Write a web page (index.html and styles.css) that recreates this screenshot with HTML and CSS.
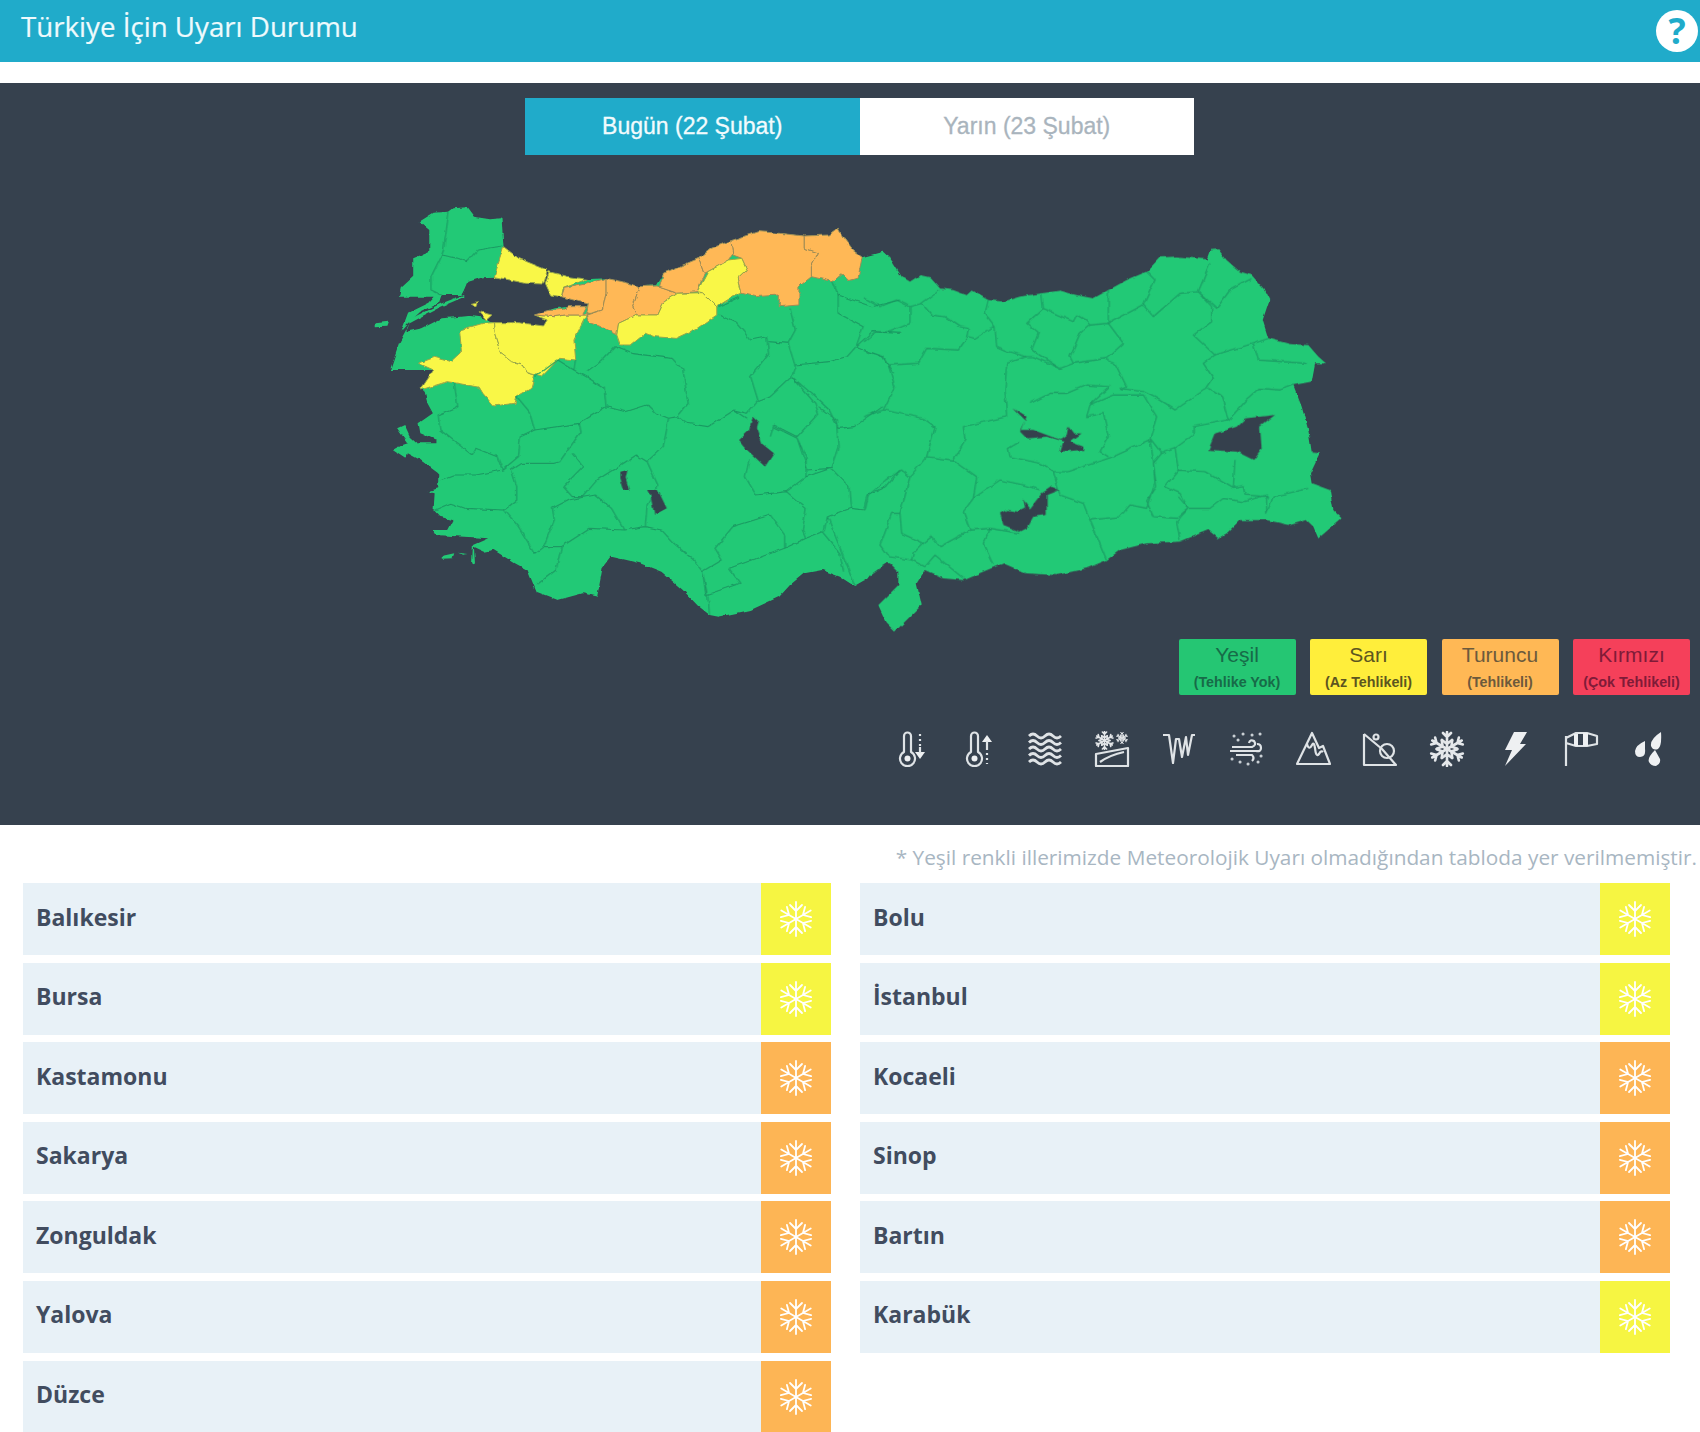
FILE: index.html
```html
<!DOCTYPE html>
<html lang="tr">
<head>
<meta charset="utf-8">
<title>Türkiye İçin Uyarı Durumu</title>
<link rel="stylesheet" href="styles.css">
</head>
<body>
<svg class="defs" width="0" height="0">
  <symbol id="flake" viewBox="0 0 36 36">
    <g class="flake-arm"><path d="M18 1V35M18 10l-6-6M18 10l6-6M18 26l-6 6M18 26l6 6"/></g>
    <g class="flake-arm" transform="rotate(60 18 18)"><path d="M18 1V35M18 10l-6-6M18 10l6-6M18 26l-6 6M18 26l6 6"/></g>
    <g class="flake-arm" transform="rotate(120 18 18)"><path d="M18 1V35M18 10l-6-6M18 10l6-6M18 26l-6 6M18 26l6 6"/></g>
  </symbol>
  <symbol id="flake2" viewBox="0 0 36 36">
    <g class="flake-arm"><path d="M18 1V35M18 6l-4-4M18 6l4-4M18 13l-5-4M18 13l5-4M18 30l-4 4M18 30l4 4M18 23l-5 4M18 23l5 4"/></g>
    <g class="flake-arm" transform="rotate(60 18 18)"><path d="M18 1V35M18 6l-4-4M18 6l4-4M18 13l-5-4M18 13l5-4M18 30l-4 4M18 30l4 4M18 23l-5 4M18 23l5 4"/></g>
    <g class="flake-arm" transform="rotate(120 18 18)"><path d="M18 1V35M18 6l-4-4M18 6l4-4M18 13l-5-4M18 13l5-4M18 30l-4 4M18 30l4 4M18 23l-5 4M18 23l5 4"/></g>
  </symbol>
</svg>
<header class="topbar">
  <h1 class="title">Türkiye İçin Uyarı Durumu</h1>
  <span class="help">?</span>
</header>
<section class="panel">
  <div class="tabs">
    <div class="tab tab-on">Bugün (22 Şubat)</div>
    <div class="tab tab-off">Yarın (23 Şubat)</div>
  </div>
  <svg class="map" viewBox="0 155 1700 484" width="1700" height="484">
    <defs>
      <filter id="rough" filterUnits="userSpaceOnUse" x="0" y="155" width="1700" height="484">
        <feTurbulence type="fractalNoise" baseFrequency="0.11" numOctaves="2" seed="4" result="n"/>
        <feDisplacementMap in="SourceGraphic" in2="n" scale="4" xChannelSelector="R" yChannelSelector="G"/>
        <feGaussianBlur stdDeviation="0.35"/>
      </filter>
    </defs>
    <g filter="url(#rough)">
    <g transform="translate(340 180) scale(.35714 .33333)">
      <path class="land" d="M222 125L262 98 305 95 318 85 355 82 375 110 420 118 452 115 458 200 432 290 400 292 360 305 340 345 285 345 278 368 225 395 190 430 172 452 190 400 250 368 265 350 165 350 170 325 205 290 205 235 250 215 250 150Z"/>
      <path class="land" d="M585 275L640 290 690 298 745 295 790 305 840 320 885 315 905 280 945 262 1005 235 1040 205 1095 182 1170 155 1230 160 1300 168 1370 165 1395 145 1410 175 1435 210 1462 232 1520 215 1545 240 1545 1150 1530 1150 1490 1170 1478 1195 1440 1218 1400 1190 1350 1170 1300 1180 1260 1215 1230 1250 1150 1290 1060 1310 1035 1305 1000 1275 960 1230 900 1175 840 1150 760 1130 735 1165 720 1250 680 1240 610 1260 550 1235 525 1170 490 1150 430 1110 405 1115 375 1100 378 1155 370 1150 372 1095 415 1075 270 1065 262 1050 300 1050 315 1020 280 1010 262 990 265 940 245 935 275 925 275 880 225 840 190 820 185 835 150 810 175 795 190 790 160 745 180 735 195 770 215 790 270 790 270 780 225 760 220 730 260 700 245 670 235 630 225 630 265 570 140 570 165 490 195 430 270 395 340 375 340 405 395 412 430 428 500 430 570 438 580 420 545 405 600 385 695 372 620 350 625 325 590 345 575 310Z"/>
      <path class="land" d="M100 430L135 425 130 440 100 442Z"/>
      <path class="land" d="M285 1128L320 1120 315 1135 285 1136ZM330 1118L360 1122 345 1124Z"/>
      <path class="sea" d="M355 310L400 295 470 295 570 330 600 350 695 372 690 380 640 380 600 385 545 405 580 420 570 438 500 430 430 428 385 405 340 410 285 415 230 445 185 455 195 430 250 395 300 365 340 350Z"/>
      <path class="land" d="M190 420L280 372 345 345 345 352 280 382 195 430Z"/>
      <path class="ylw" d="M365 370L385 365 380 378ZM390 395L425 405 410 420Z"/>
      <path class="ylw" d="M458 200L500 235 580 270 570 312 520 310 432 290Z"/>
      <path class="ylw" d="M585 275L640 290 690 298 625 325 620 350 590 345 575 310Z"/>
      <path class="ylw" d="M220 550L265 532 310 545 340 515 335 450 400 430 430 428 432 460 450 520 490 550 510 555 525 578 545 585 535 625 495 650 490 670 430 678 400 640 390 622 330 610 300 605 225 630 250 590 262 570Z"/>
      <path class="ylw" d="M430 428L500 428 570 438 580 420 545 405 600 410 630 405 690 405 655 480 660 540 615 535 565 590 525 578 510 555 480 545 450 520 432 460Z"/>
      <path class="org" d="M620 350L628 325 690 312 745 295 745 340 735 390 700 400 680 400 690 380 640 380 625 388 580 392 545 405 600 410 630 405 690 405 695 372Z"/>
      <path class="org" d="M745 295L790 305 840 320 820 380 830 405 780 430 775 465 730 440 695 425 690 405 735 390 745 340Z"/>
      <path class="org" d="M840 320L885 318 945 340 905 370 890 405 830 405 820 380Z"/>
      <path class="org" d="M895 322L905 280 945 262 1005 235 1020 280 1000 335 945 340Z"/>
      <path class="org" d="M1005 235L1040 205 1095 182 1100 225 1090 240 1030 275 1020 280Z"/>
      <path class="org" d="M1095 182L1170 155 1230 160 1300 168 1300 205 1340 220 1320 260 1320 290 1285 320 1285 375 1230 380 1230 345 1165 350 1125 340 1115 295 1140 270 1125 235 1100 225Z"/>
      <path class="org" d="M1300 168L1370 165 1395 145 1410 175 1435 210 1462 232 1450 295 1425 302 1405 282 1380 305 1320 290 1320 260 1340 220 1300 205Z"/>
      <path class="ylw" d="M780 430L830 405 890 405 905 370 945 340 1015 338 1055 380 1055 405 1000 445 940 475 880 470 855 460 815 495 785 495 775 465Z"/>
      <path class="ylw" d="M1030 275L1090 240 1125 235 1140 270 1115 295 1125 340 1100 350 1055 380 1015 338 1000 335Z"/>
    </g>
    <g transform="translate(860 200) scale(.33333)">
      <path class="land" d="M12 172L90 170 100 190 125 230 150 245 180 225 210 232 240 265 280 270 320 285 335 272 385 300 430 305 480 290 545 280 600 272 650 285 700 295 745 270 800 240 860 215 900 172 950 170 1040 178 1050 150 1075 148 1100 180 1140 215 1175 225 1210 265 1228 300 1208 360 1225 415 1290 432 1345 435 1375 470 1398 490 1365 490 1355 545 1300 555 1325 620 1345 690 1355 755 1380 757 1350 820 1355 850 1410 870 1420 930 1445 955 1410 985 1375 1015 1360 980 1340 960 1290 975 1220 960 1140 960 1100 1000 1075 1015 1045 990 960 1025 860 1030 780 1050 740 1080 680 1105 590 1125 500 1120 430 1090 370 1115 310 1140 250 1135 195 1110 170 1150 185 1215 135 1265 105 1295 80 1270 55 1215 115 1155 115 1115 85 1085 25 1130 12 1140Z"/>
    </g>
    <g transform="translate(340 180) scale(.35714 .33333)">
      <path class="line" d="M305 95L290 210 285 225 330 235 355 245 385 210 455 198M285 225L255 290 255 330 285 345M320 610L330 680 275 705 280 750 340 800 370 825 380 805 440 830 455 870 380 885 315 885 280 900M495 650L530 695 545 750 505 770 500 830 455 870M545 750L670 730 675 755 615 845 600 850 510 850 480 870 495 920 495 960 460 990 350 985 310 970 265 990M460 990L500 1040 545 1120 570 1100 600 1020 595 985 640 960 715 945 760 985 795 1050 700 1045 620 1100 570 1100M650 820L680 860 625 920 650 950 680 950 720 900 830 825 860 845 890 915 860 975 855 1040 795 1050M620 1100L605 1170 550 1215M855 1040L900 1050 935 1090 990 1140 1015 1175 1030 1250 1035 1305M1015 1175L1070 1140 1050 1105 1100 1040 1205 1005 1245 1065 1245 1105 1305 1075 1350 1055 1400 1120 1410 1175M1015 1175L1025 1245 1120 1210 1090 1165 1180 1130 1245 1105M670 730L745 680 800 695 860 675 885 700 920 715 905 800 860 845M548 590L610 540 655 570 690 590 740 625 745 680M660 540L655 570M690 575L730 545 770 500 815 520 930 535 960 570 975 670 945 710 920 715M945 710L970 730 1030 740 1105 690 1140 715M1060 405L1110 430 1150 480 1195 470 1200 520 1150 590 1170 660 1140 700 1105 690M1200 485L1255 490 1275 560 1265 590 1205 650 1170 665M1260 385L1275 450 1255 490M1275 555L1370 545 1420 530 1445 500 1520 530 1550 580M1265 590L1320 640 1370 690 1395 745 1440 740 1520 680M1340 680L1390 720 1395 800 1375 865 1310 870 1280 775M1265 590L1330 670 1340 700 1280 770 1215 735 1205 770M1215 740L1280 775 1305 830 1305 890 1250 935 1165 945 1135 890 1145 840M1250 935L1305 985 1295 1050 1305 1075M1305 890L1375 865 1425 920 1430 985 1365 1010 1355 1055M1430 985L1470 990 1480 945 1530 920 1568 870M1365 1010L1410 1130 1440 1215M1395 345L1395 400 1465 440 1445 500M1395 345L1490 380 1568 360M1445 500L1490 455 1568 460M1395 345L1380 305M1060 380L1120 350"/>
      <path class="sea" d="M1155 710L1170 725 1165 745 1180 790 1215 820 1190 860 1170 840 1130 800 1115 780 1145 750ZM860 930L890 930 915 985 880 1005 870 950ZM785 875L805 870 800 895 810 930 795 930 785 895Z"/>
    </g>
    <g transform="translate(860 200) scale(.33333)">
      <path class="line" d="M12 293L60 320 110 300 150 320 150 370 90 395 50 395 12 425M150 320L185 310 240 270M185 310L215 345 255 350 300 380 325 385 320 415 295 450 200 445 175 490 85 495 70 470 12 452M85 495L105 560 70 630 12 650M325 410L345 415 390 385 405 380 410 440 445 455 500 470 440 490 435 570 440 650M385 300L375 340 405 380M500 470L520 470 600 505 640 490 630 470 660 400 690 375 745 370 790 430 740 475 640 490M545 280L550 325 500 370 535 400 515 450 600 505M550 325L640 365 650 345 675 360 690 375M745 270L745 370 850 315 885 240 860 215M850 315L880 350 960 280 1015 275 1055 320 1055 365 1000 405 1065 465 1030 490 1060 535 1040 565 945 630 890 595 850 575 780 565 800 560 765 490 730 475M1050 190L1015 275M1015 275L1070 325 1110 270 1175 235M1065 465L1180 430 1195 480 1340 490M1180 430L1225 415M1045 565L1085 590 1105 660M1105 660L1160 600 1200 565 1260 570 1300 555M440 650L310 680 315 720 280 780 200 770 225 680 190 655 70 630M280 780L350 830 340 895 420 840 490 855 540 870M200 770L150 830 125 810 80 840 20 890 12 925M150 830L120 940 125 1000 190 1030 215 1010 240 1040 330 990 310 935 340 895M120 940L95 940 60 1035 85 1070 155 1080M190 1030L160 1060 155 1080 195 1100 225 1065 310 1135M330 990L390 985 370 1030 400 1095M390 985L480 1000M580 815L600 885 670 910 690 960 740 1080M690 960L780 950 810 915 860 925 885 850 880 780 870 720 760 770 625 815 580 815M580 815L540 790 450 770 445 745 480 725M510 610L570 580 620 580 680 555 750 560 690 615 680 650 730 640 745 710 720 755 745 770M690 615L760 585 850 585 890 650 870 715M870 715L905 760 880 790 890 860 860 905 880 950 950 955 985 925 955 890M905 760L945 745 955 810 915 860 960 880 985 925 1050 925 1090 895 1150 905 1220 885 1220 940 1240 890 1345 865M945 745L1000 705 1000 680 1105 660M955 810L1035 815 1120 865 1150 860 1155 885 1225 890M1120 865L1125 780M985 925L950 965 960 1020"/>
      <path class="sea" d="M1045 750L1065 700 1130 680 1155 655 1245 645 1200 680 1205 745 1180 780 1130 755ZM460 625L500 650 480 690 520 690 600 720 620 705 625 680 640 700 665 700 630 725 670 740 670 750 600 755 610 725 560 710 500 715 480 695 495 660ZM420 940L440 930 475 935 495 925 490 900 510 925 545 880 575 860 598 870 560 885 560 945 520 950 500 985 480 995 430 975Z"/>
    </g>
    </g>
  </svg>
  <div class="legend">
    <div class="lg lg-green"><span class="lg-name">Yeşil</span><span class="lg-sub">(Tehlike Yok)</span></div>
    <div class="lg lg-yellow"><span class="lg-name">Sarı</span><span class="lg-sub">(Az Tehlikeli)</span></div>
    <div class="lg lg-orange"><span class="lg-name">Turuncu</span><span class="lg-sub">(Tehlikeli)</span></div>
    <div class="lg lg-red"><span class="lg-name">Kırmızı</span><span class="lg-sub">(Çok Tehlikeli)</span></div>
  </div>
  <div class="hazards">
    <svg class="hz" viewBox="0 0 36 36"><path d="M11 5a3.500 3.500 0 0 1 7 0V21a7.500 7.500 0 1 1-7 0Z"/><circle class="hz-fill" cx="14.500" cy="27.500" r="3"/><path d="M27 3V15" stroke-dasharray="2 3"/><path class="hz-fill" d="M22 21h10l-5 7Z"/><path d="M27 16V22"/></svg>
    <svg class="hz" viewBox="0 0 36 36"><path d="M11 5a3.500 3.500 0 0 1 7 0V21a7.500 7.500 0 1 1-7 0Z"/><circle class="hz-fill" cx="14.500" cy="27.500" r="3"/><path class="hz-fill" d="M22 11h10l-5-7Z"/><path d="M27 10V19"/><path d="M27 22V33" stroke-dasharray="2 3"/></svg>
    <svg class="hz hz-wave" viewBox="0 0 36 36"><path d="M2 5q4-4 8 0t8 0 8 0 8 0M2 11.500q4-4 8 0t8 0 8 0 8 0M2 18q4-4 8 0t8 0 8 0 8 0M2 24.500q4-4 8 0t8 0 8 0 8 0M2 31q4-4 8 0t8 0 8 0 8 0"/></svg>
    <svg class="hz" viewBox="0 0 36 36"><use class="hz-sflake" href="#flake2" x="1" y="0" width="19" height="19"/><use class="hz-sflake" href="#flake2" x="22" y="1" width="12" height="12"/><path d="M2 23L34 17V35H2ZM6 31Q16 24 30 21"/></svg>
    <svg class="hz" viewBox="0 0 36 36"><path d="M2 4H8L12 32 15 8H18L21 26 25 6 27 24 31 4H34"/></svg>
    <svg class="hz" viewBox="0 0 36 36"><path d="M4 16H24Q29 14 26 10 22 8 21 12M2 20H28Q33 21 33 17 33 13 29 13M8 24H24Q27 27 24 30"/><path class="hz-dots" d="M6 5h.1M15 3h.1M24 4h.1M32 3h.1M10 9h.1M4 28h.1M12 31h.1M20 33h.1M30 31h.1M33 25h.1"/></svg>
    <svg class="hz" viewBox="0 0 36 36"><path d="M2 33L17 2 24 17 28 15 35 33ZM12 13Q14 20 17 14 19 10 20 17 21 27 24 23 26 19 28 21"/></svg>
    <svg class="hz" viewBox="0 0 36 36"><path d="M2 3V34H34L20 18 2 3"/><circle cx="25" cy="20" r="7"/><circle cx="14" cy="6" r="2.500"/></svg>
    <svg class="hz" viewBox="0 0 36 36"><use class="hz-bflake" href="#flake2" width="36" height="36"/></svg>
    <svg class="hz" viewBox="0 0 36 36"><path class="hz-fill" d="M18 1H31L24 13H30L9 35 16 19H9Z"/></svg>
    <svg class="hz" viewBox="0 0 36 36"><path d="M3 5V35M3 7L13 2H24L34 5V13L24 15 13 15 3 12Z"/><path class="hz-fill" d="M11 3H15V15H11ZM20 2H25V15H20Z"/></svg>
    <svg class="hz" viewBox="0 0 36 36"><path class="hz-fill" d="M15 10Q6 14 5 20 5 26 10 26 16 26 15 18ZM31 1Q20 8 21 15 23 20 28 18 32 15 31 1ZM25 19Q17 27 19 31 21 35 26 35 31 33 30 28Z"/></svg>
  </div>
</section>
<p class="note">* Yeşil renkli illerimizde Meteorolojik Uyarı olmadığından tabloda yer verilmemiştir.</p>
<main class="rows">
  <div class="row"><span class="city">Balıkesir</span><span class="swatch sw-y"><svg class="fl"><use href="#flake"/></svg></span></div>
  <div class="row"><span class="city">Bolu</span><span class="swatch sw-y"><svg class="fl"><use href="#flake"/></svg></span></div>
  <div class="row"><span class="city">Bursa</span><span class="swatch sw-y"><svg class="fl"><use href="#flake"/></svg></span></div>
  <div class="row"><span class="city">İstanbul</span><span class="swatch sw-y"><svg class="fl"><use href="#flake"/></svg></span></div>
  <div class="row"><span class="city">Kastamonu</span><span class="swatch sw-o"><svg class="fl"><use href="#flake"/></svg></span></div>
  <div class="row"><span class="city">Kocaeli</span><span class="swatch sw-o"><svg class="fl"><use href="#flake"/></svg></span></div>
  <div class="row"><span class="city">Sakarya</span><span class="swatch sw-o"><svg class="fl"><use href="#flake"/></svg></span></div>
  <div class="row"><span class="city">Sinop</span><span class="swatch sw-o"><svg class="fl"><use href="#flake"/></svg></span></div>
  <div class="row"><span class="city">Zonguldak</span><span class="swatch sw-o"><svg class="fl"><use href="#flake"/></svg></span></div>
  <div class="row"><span class="city">Bartın</span><span class="swatch sw-o"><svg class="fl"><use href="#flake"/></svg></span></div>
  <div class="row"><span class="city">Yalova</span><span class="swatch sw-o"><svg class="fl"><use href="#flake"/></svg></span></div>
  <div class="row"><span class="city">Karabük</span><span class="swatch sw-y"><svg class="fl"><use href="#flake"/></svg></span></div>
  <div class="row"><span class="city">Düzce</span><span class="swatch sw-o"><svg class="fl"><use href="#flake"/></svg></span></div>
</main>
</body>
</html>
```
FILE: styles.css
```css
* { box-sizing: border-box; }
html, body { margin: 0; padding: 0; background: #fff; }
body { width: 1700px; height: 1432px; overflow: hidden; font-family: "Open Sans", sans-serif; }
.defs { position: absolute; }
.flake-arm path { fill: none; stroke: currentColor; stroke-linecap: round; }

.topbar { height: 62px; background: #20abca; display: flex; align-items: center; justify-content: space-between; padding: 0 2px 0 21px; margin-bottom: 21px; }
.title { margin: 0 0 9px; font-size: 27.700px; font-weight: 400; color: #eefafd; line-height: 1; -webkit-text-stroke: .2px #eefafd; }
.help { width: 42px; height: 42px; border-radius: 50%; background: #fff; color: #20abca; font-weight: 700; font-size: 36px; line-height: 42px; text-align: center; }

.panel { height: 742px; background: #36414e; padding-top: 15px; }
.tabs { display: flex; margin-left: 525px; width: 669px; height: 57px; }
.tab { flex: 1; display: flex; align-items: center; justify-content: center; font-family: "Liberation Sans", Arial, sans-serif; font-size: 23px; -webkit-text-stroke: .3px currentColor; }
.tab-on { background: #20abca; color: #f2fbfd; }
.tab-off { background: #fff; color: #a9b4bd; }

.map { display: block; }
.land { fill: #24c976; }
.sea { fill: #36414e; }
.ylw { fill: #f9f747; stroke: #9aa648; stroke-width: 1; vector-effect: non-scaling-stroke; }
.org { fill: #ffb857; stroke: #a08c55; stroke-width: 1; vector-effect: non-scaling-stroke; }
.line { fill: none; stroke: #1a9a63; stroke-width: 1.100; vector-effect: non-scaling-stroke; stroke-linejoin: round; }

.legend { display: flex; justify-content: flex-end; gap: 14.500px; padding-right: 10px; }
.lg { width: 117px; height: 56px; border-radius: 2px; display: flex; flex-direction: column; align-items: center; font-family: "Liberation Sans", Arial, sans-serif; padding-top: 3px; }
.lg-name { font-size: 21px; line-height: 26px; }
.lg-sub { font-size: 14.300px; font-weight: 700; line-height: 26px; margin-top: 1px; }
.lg-green { background: #25c673; color: #176b48; }
.lg-yellow { background: #ffee3b; color: #5c5520; }
.lg-orange { background: #ffb855; color: #6c5a3c; }
.lg-red { background: #f5405a; color: #7f1b38; }

.hazards { display: flex; justify-content: flex-end; gap: 31px; padding: 36px 34px 0 0; color: #e4e7ea; }
.hz { width: 36px; height: 36px; fill: none; stroke: #dfe3e6; stroke-width: 2.200; stroke-linejoin: round; flex: none; }
.hz-wave { stroke-width: 2.800; }
.hz-sflake { stroke-width: 3; }
.hz-bflake { stroke-width: 2.600; }
.hz-fill { fill: #eef0f2; stroke: none; }
.hz-dots { stroke-width: 3; stroke-linecap: round; stroke: #c9cfd4; }

.note { margin: 18px 3px 12px 0; text-align: right; font-size: 20.800px; line-height: 28px; color: #a8b6c2; white-space: nowrap; }

.rows { display: grid; grid-template-columns: 808px 810px; column-gap: 29px; row-gap: 7.600px; grid-auto-rows: 72px; padding-left: 23px; }
.row { background: #e8f1f7; display: flex; align-items: center; justify-content: space-between; }
.city { padding: 0 0 5px 13px; font-size: 23px; font-weight: 700; color: #414c5f; }
.swatch { width: 70px; height: 100%; display: flex; align-items: center; justify-content: center; color: #fff; }
.sw-y { background: #f6f542; }
.sw-o { background: #fdb555; }
.fl { width: 36px; height: 36px; stroke-width: 1.800; }
```
